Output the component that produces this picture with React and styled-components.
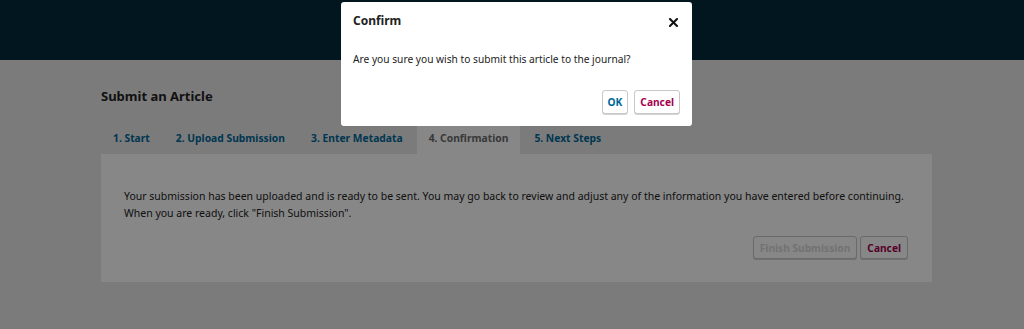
import React from "react";
import styled, { createGlobalStyle } from "styled-components";

const GlobalStyle = createGlobalStyle`
    html, body {
        margin: 0;
        padding: 0;
        background: #e9e9e9;
        font-family: "Noto Sans", "DejaVu Sans", sans-serif;
    }
`;

const Page = styled.div`
    position: relative;
    width: 1024px;
    height: 329px;
    overflow: hidden;
    background: #e9e9e9;
`;

const Header = styled.header`
    height: 60px;
    background: #022a3c;
`;

const Main = styled.main`
    padding: 27px 92px 0 101px;
`;

const Title = styled.h1`
    margin: 0 0 21px;
    font-size: 13px;
    font-weight: 700;
    line-height: 18px;
    color: #222;
`;

const Tabs = styled.ul`
    display: flex;
    margin: 0;
    padding: 0;
    list-style: none;
`;

const Tab = styled.li`
    padding: 0 12px 4px;
    height: 28px;
    box-sizing: border-box;
    display: flex;
    align-items: center;
    margin-right: 2px;
    font-size: 10.3px;
    font-weight: 700;
    color: ${props => (props.active ? "#6b6b6b" : "#006798")};
    background: ${props => (props.active ? "#fff" : "transparent")};
`;

const Panel = styled.section`
    background: #fff;
    padding: 34px 24px 0 23px;
    height: 128px;
    box-sizing: border-box;
`;

const Text = styled.p`
    margin: 0;
    font-size: 10.5px;
    line-height: 17px;
    color: #222;
`;

const Actions = styled.div`
    display: flex;
    justify-content: flex-end;
    gap: 3px;
    margin-top: 14px;
`;

const Button = styled.button`
    height: 23px;
    padding: 0 6px;
    font-family: inherit;
    font-size: 10.2px;
    font-weight: 700;
    background: #fff;
    border: 1px solid #c8c8c8;
    border-radius: 3px;
    box-shadow: 0 1px 0 #d4d4d4;
    color: ${props => props.color};
`;

const Backdrop = styled.div`
    position: absolute;
    inset: 0;
    background: rgba(0, 0, 0, 0.47);
`;

const Modal = styled.div`
    position: absolute;
    left: 341px;
    top: 2px;
    width: 351px;
    height: 124px;
    box-sizing: border-box;
    background: #fff;
    border-radius: 3px;
    padding: 0 12px;
`;

const ModalHead = styled.div`
    display: flex;
    justify-content: space-between;
    align-items: center;
    height: 36px;
`;

const ModalTitle = styled.h2`
    margin: 0;
    font-size: 12px;
    font-weight: 700;
    color: #222;
`;

const Close = styled.svg`
    width: 9px;
    height: 9px;
    margin: 4px 2px 0 0;
`;

const ModalText = styled.p`
    margin: 13px 0 0;
    font-size: 10.2px;
    line-height: 17px;
    color: #222;
`;

const ModalActions = styled.div`
    display: flex;
    justify-content: flex-end;
    gap: 6px;
    margin-top: 22px;
`;

const ModalButton = styled(Button)`
    height: 24px;
    padding: 0 5px;
`;

export default function App() {
    return (
        <Page>
            <GlobalStyle />
            <Header />
            <Main>
                <Title>Submit an Article</Title>
                <Tabs>
                    <Tab>1. Start</Tab>
                    <Tab>2. Upload Submission</Tab>
                    <Tab>3. Enter Metadata</Tab>
                    <Tab active>4. Confirmation</Tab>
                    <Tab>5. Next Steps</Tab>
                </Tabs>
                <Panel>
                    <Text>
                        Your submission has been uploaded and is ready to be sent. You may go back to review and adjust any of the information you have entered before continuing.
                        <br />
                        When you are ready, click "Finish Submission".
                    </Text>
                    <Actions>
                        <Button color="#d8d8d8" disabled>Finish Submission</Button>
                        <Button color="#a40050">Cancel</Button>
                    </Actions>
                </Panel>
            </Main>
            <Backdrop />
            <Modal>
                <ModalHead>
                    <ModalTitle>Confirm</ModalTitle>
                    <Close viewBox="0 0 9 9">
                        <path d="M1 1L8 8M8 1L1 8" stroke="#111" strokeWidth="2" strokeLinecap="square" />
                    </Close>
                </ModalHead>
                <ModalText>Are you sure you wish to submit this article to the journal?</ModalText>
                <ModalActions>
                    <ModalButton color="#006798">OK</ModalButton>
                    <ModalButton color="#a40050">Cancel</ModalButton>
                </ModalActions>
            </Modal>
        </Page>
    );
}
